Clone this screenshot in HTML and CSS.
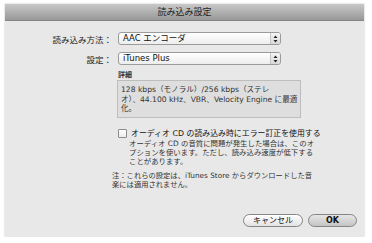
FILE: index.html
```html
<!DOCTYPE html>
<html lang="ja">
<head>
  <meta charset="UTF-8" />
  <title>読み込み設定</title>
  <link rel="stylesheet" href="styles.css">
</head>
<body>

  <div class="window">
    <div class="titlebar">読み込み設定</div>

    <div class="content">
      <div class="form-row">
        <label class="form-label">読み込み方法：</label>
        <div class="popup">
          <span class="popup-value">AAC エンコーダ</span>
          <span class="popup-arrows">
            <svg width="5" height="8" viewBox="0 0 5 8"><path d="M2.5 0.5 L4.5 3 L0.5 3 Z M0.5 5 L4.5 5 L2.5 7.5 Z" fill="#222"/></svg>
          </span>
        </div>
      </div>

      <div class="form-row">
        <label class="form-label">設定：</label>
        <div class="popup">
          <span class="popup-value">iTunes Plus</span>
          <span class="popup-arrows">
            <svg width="5" height="8" viewBox="0 0 5 8"><path d="M2.5 0.5 L4.5 3 L0.5 3 Z M0.5 5 L4.5 5 L2.5 7.5 Z" fill="#222"/></svg>
          </span>
        </div>
      </div>

      <div class="details">
        <div class="details-title">詳細</div>
        <div class="details-box">
          128 kbps（モノラル）/256 kbps（ステレ<br>
          オ）、44.100 kHz、VBR、Velocity Engine に最適<br>
          化。
        </div>
      </div>

      <div class="check-row">
        <span class="checkbox"></span>
        <span class="check-label">オーディオ CD の読み込み時にエラー訂正を使用する</span>
      </div>
      <p class="check-help">
        オーディオ CD の音質に問題が発生した場合は、このオ<br>
        プションを使います。ただし、読み込み速度が低下する<br>
        ことがあります。
      </p>

      <p class="note">
        注：これらの設定は、iTunes Store からダウンロードした音<br>
        楽には適用されません。
      </p>

      <div class="buttons">
        <button class="btn btn-cancel">キャンセル</button>
        <button class="btn btn-ok">OK</button>
      </div>
    </div>
  </div>

</body>
</html>
```

FILE: styles.css
```css
body {
  margin: 0;
  background: #fff;
  font-family: "DejaVu Sans", "Noto Sans CJK JP", sans-serif;
  color: #222;
}
.window {
  width: 359px;
  height: 233px;
  margin: 4px 0 0 5px;
  background: #e8e8e8;
  box-shadow: 0 0 2px rgba(0,0,0,0.25);
  display: flex;
  flex-direction: column;
}
.titlebar {
  height: 16px;
  line-height: 16px;
  text-align: center;
  font-size: 9px;
  color: #1e1e1e;
  background: linear-gradient(#c8c8c8, #989898);
  border-bottom: 1px solid #858585;
}
.content {
  flex: 1;
  display: flex;
  flex-direction: column;
  padding: 11px 7px 10px 0;
}
.form-row {
  display: grid;
  grid-template-columns: 107px 163px;
  column-gap: 6px;
  align-items: center;
  margin-bottom: 7px;
}
.form-label {
  text-align: right;
  font-size: 8.5px;
  color: #222;
}
.popup {
  display: flex;
  height: 11px;
  border: 1px solid #9b9b9b;
  border-radius: 3px;
  background: linear-gradient(#ffffff, #ededed);
}
.popup-value {
  flex: 1;
  padding-left: 4px;
  font-size: 8.5px;
  line-height: 11px;
  color: #111;
}
.popup-arrows {
  width: 9px;
  display: flex;
  align-items: center;
  justify-content: center;
  border-left: 1px solid #c4c4c4;
  background: linear-gradient(#f4f4f4, #d8d8d8);
  border-radius: 0 2px 2px 0;
}
.details {
  margin-left: 112px;
  margin-top: -1px;
}
.details-title {
  margin-left: 1px;
  font-size: 7px;
  font-weight: bold;
  line-height: 9px;
  color: #333;
}
.details-box {
  width: 177px;
  padding: 4px 2px 3px 3px;
  border: 1px solid #bdbdbd;
  background: #dedede;
  font-size: 7.6px;
  line-height: 9.5px;
  color: #333;
  white-space: nowrap;
}
.check-row {
  display: flex;
  align-items: center;
  margin: 10px 0 0 113px;
  height: 11px;
}
.checkbox {
  flex: none;
  width: 7px;
  height: 7px;
  border: 1px solid #8c8c8c;
  border-radius: 1px;
  background: linear-gradient(#ffffff, #ececec);
  margin-right: 4px;
}
.check-label {
  font-size: 7.9px;
  line-height: 11px;
  color: #111;
  white-space: nowrap;
}
.check-help {
  margin: 0 0 0 124px;
  font-size: 7.4px;
  line-height: 9px;
  color: #333;
  white-space: nowrap;
}
.note {
  margin: 5px 0 0 107px;
  font-size: 7.3px;
  line-height: 9.5px;
  color: #333;
  white-space: nowrap;
}
.buttons {
  margin-top: auto;
  display: flex;
  justify-content: flex-end;
  gap: 5px;
}
.btn {
  height: 13px;
  padding: 0;
  border: 1px solid #858585;
  border-radius: 7px;
  font-family: inherit;
  font-size: 8px;
  line-height: 11px;
  color: #111;
  background: linear-gradient(#ffffff, #e2e2e2);
}
.btn-cancel {
  width: 60px;
}
.btn-ok {
  width: 49px;
  font-weight: bold;
  background: linear-gradient(#e6e6e6, #c4c4c4);
}
```
